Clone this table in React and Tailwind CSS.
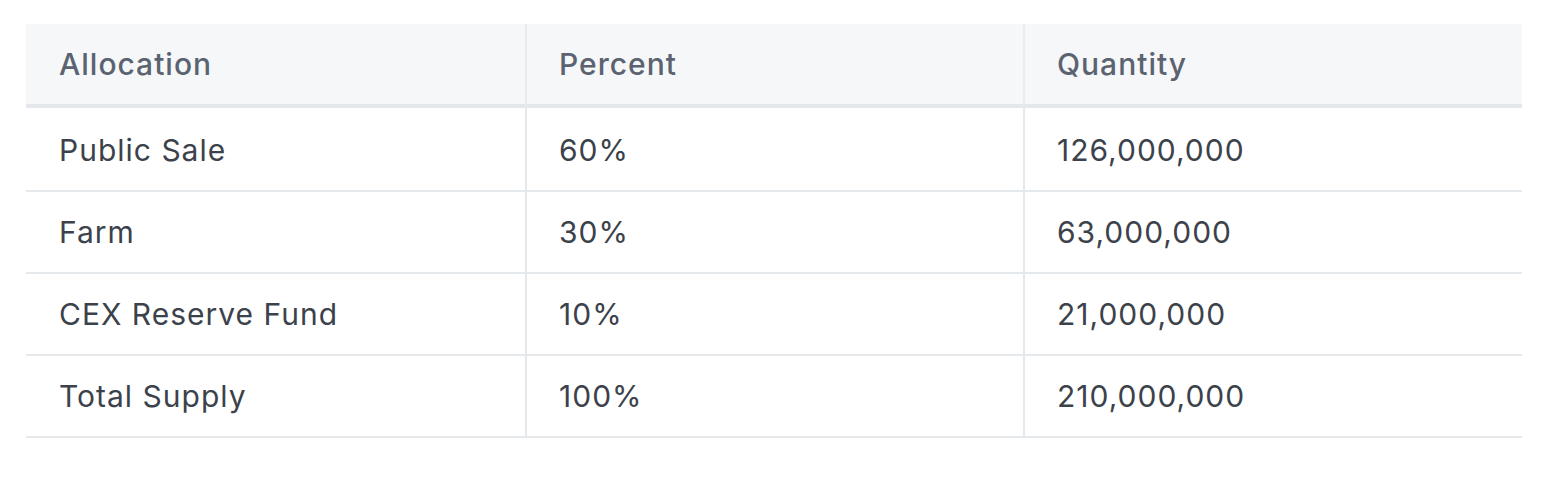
import React from 'react';

const rows = [
  { name: 'Public Sale', percent: '60%', qty: '126,000,000' },
  { name: 'Farm', percent: '30%', qty: '63,000,000' },
  { name: 'CEX Reserve Fund', percent: '10%', qty: '21,000,000' },
  { name: 'Total Supply', percent: '100%', qty: '210,000,000' },
];

const App = () => {
  return (
    <div className="min-h-[488px] bg-white pt-[24px] pl-[26px]" style={{ fontFamily: 'Inter, "Noto Sans", sans-serif' }}>
      <table className="w-[1496px] table-fixed border-separate border-spacing-0 text-[30px] tracking-[1px]">
        <thead>
          <tr className="bg-[#f5f7f9]">
            <th className="h-[84px] w-[499px] pl-[33px] text-left font-medium text-[#5b6370] border-b-4 border-[#e4e7eb]">Allocation</th>
            <th className="h-[84px] w-[498px] pl-[32px] text-left font-medium text-[#5b6370] border-b-4 border-l-2 border-b-[#e4e7eb] border-l-[#e9ecef]">Percent</th>
            <th className="h-[84px] pl-[32px] text-left font-medium text-[#5b6370] border-b-4 border-l-2 border-b-[#e4e7eb] border-l-[#e9ecef]">Quantity</th>
          </tr>
        </thead>
        <tbody>
          {rows.map((row, i) => {
            const h = i === 0 ? 'h-[84px] pt-[2px]' : 'h-[82px] pt-0';
            return (
              <tr key={row.name}>
                <td className={`${h} pl-[33px] text-[#3c424b] border-b-2 border-[#e6e9ec]`}>{row.name}</td>
                <td className={`${h} pl-[32px] text-[#3c424b] border-b-2 border-l-2 border-[#e6e9ec]`}>{row.percent}</td>
                <td className={`${h} pl-[32px] text-[#3c424b] border-b-2 border-l-2 border-[#e6e9ec]`}>{row.qty}</td>
              </tr>
            );
          })}
        </tbody>
      </table>
    </div>
  );
};

export default App;
